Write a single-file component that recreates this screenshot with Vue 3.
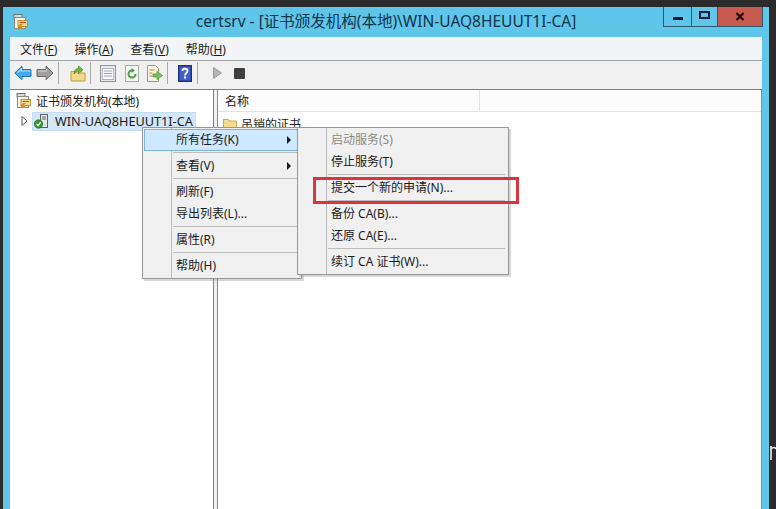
<template>
  <div class="page">
    <div class="window">
      <header class="titlebar">
        <div class="title-left">
          <svg width="16" height="16" viewBox="0 0 16 16">
            <rect x="1" y="0.5" width="8" height="3.500" fill="#d8dce0" stroke="#6f7378"/>
            <rect x="1.500" y="3.500" width="11" height="11" fill="#f6f3ea" stroke="#8a8a80"/>
            <rect x="5" y="6.500" width="9.500" height="6" fill="#f5dd92" stroke="#c98e2c"/>
            <path d="M6.500 8.500h6.500" stroke="#d0452a"/>
            <path d="M6.500 10.500h3" stroke="#c98e2c"/>
            <circle cx="7" cy="13" r="2.200" fill="#d9902c"/>
            <circle cx="6" cy="14" r="1" fill="#5aa23a"/>
          </svg>
        </div>
        <div class="title">certsrv - [证书颁发机构(本地)\WIN-UAQ8HEUUT1I-CA]</div>
        <div class="caption">
          <div class="cap cap-min"><span class="glyph-min"></span></div>
          <div class="cap cap-max"><span class="glyph-max"></span></div>
          <div class="cap cap-close">
            <svg width="10" height="9" viewBox="0 0 10 9"><path d="M1.500 1l7 7M8.500 1l-7 7" stroke="#200a0a" stroke-width="2.200"/></svg>
          </div>
        </div>
      </header>

      <div class="client">
        <nav class="menubar">
          <span v-for="m in menus" :key="m.name" class="menu">{{ m.name }}(<u>{{ m.key }}</u>)</span>
        </nav>

        <div class="toolbar">
          <svg class="tb tb-back" width="18" height="16" viewBox="0 0 18 16">
            <path d="M.8 8 8 1.200v3.300h9v7H8v3.300z" fill="#45a8ea" stroke="#1c78bd" stroke-linejoin="round"/>
            <path d="M3.500 7.500 7.500 4v2h9" fill="none" stroke="#aee0fa" stroke-width="1.200"/>
          </svg>
          <svg class="tb tb-fwd" width="18" height="16" viewBox="0 0 18 16">
            <path d="M17 8 10 1.200v3.300H1v7h9v3.300z" fill="#a0a0a0" stroke="#6a6a6a" stroke-linejoin="round"/>
            <path d="M2 6h8.500V4" fill="none" stroke="#d2d2d2"/>
          </svg>
          <i class="sep s1"></i>
          <svg class="tb tb-up" width="16" height="17" viewBox="0 0 16 17">
            <path d="M1 6.500h4l1.500 1.500H15v8H1z" fill="#f4d98a" stroke="#c49a3e"/>
            <path d="M4 9C4 5 6.500 3.500 8.500 3.500V1L13 4.800 8.500 8.500V6C7 6 5.500 7 4 9z" fill="#76b83f" stroke="#467f22" stroke-width=".7"/>
          </svg>
          <i class="sep s2"></i>
          <svg class="tb tb-doc" width="16" height="17" viewBox="0 0 16 17">
            <rect x=".5" y=".5" width="15" height="16" fill="#e6e8eb" stroke="#8f9399"/>
            <rect x="2.500" y="3.500" width="11" height="11" fill="#f8f8f8" stroke="#b0b4ba"/>
            <path d="M4 6h8M4 8.500h8M4 11h8" stroke="#97a6bc"/>
          </svg>
          <svg class="tb tb-refresh" width="14" height="17" viewBox="0 0 14 17">
            <rect x=".5" y=".5" width="13" height="16" fill="#f3f4f1" stroke="#a5aca6"/>
            <path d="M10.500 9A3.500 3.500 0 1 1 7 5.500" fill="none" stroke="#4a9c48" stroke-width="2"/>
            <path d="M6.500 3 10 5.500 6.500 8z" fill="#4a9c48"/>
          </svg>
          <svg class="tb tb-export" width="17" height="17" viewBox="0 0 17 17">
            <path d="M1.500.5h8l3 3v13h-11z" fill="#f7f3e2" stroke="#a39873"/>
            <path d="M3.500 5h5M3.500 8h3M3.500 11h3" stroke="#b9802f"/>
            <path d="M7 9h4V6.500L16.500 10.500 11 14.500V12H7z" fill="#76c456" stroke="#4b9434" stroke-width=".7"/>
          </svg>
          <i class="sep s3"></i>
          <svg class="tb tb-help" width="14" height="17" viewBox="0 0 14 17">
            <rect x=".5" y=".5" width="13" height="16" fill="#2f49ad" stroke="#1c2e80"/>
            <rect x="2" y="2" width="10" height="13" fill="#4060c8"/>
            <path d="M4.500 6C4.500 3 9.500 3 9.500 6c0 2-2.500 2-2.500 4.500" fill="none" stroke="#fff" stroke-width="1.800"/>
            <rect x="6" y="11.500" width="2" height="2" fill="#fff"/>
          </svg>
          <i class="sep s4"></i>
          <svg class="tb tb-play" width="9" height="12" viewBox="0 0 9 12">
            <path d="M.5.5 8.500 6 .5 11.500z" fill="#b4b4b4" stroke="#9a9a9a"/>
          </svg>
          <span class="stop"></span>
        </div>

        <main class="panes">
          <section class="tree">
            <div class="tree-row root">
              <svg width="16" height="16" viewBox="0 0 16 16">
                <rect x="1" y="0.500" width="8" height="3.500" fill="#d8dce0" stroke="#6f7378"/>
                <rect x="1.500" y="3.500" width="11" height="11" fill="#f6f3ea" stroke="#8a8a80"/>
                <rect x="5" y="6.500" width="9.500" height="6" fill="#f5dd92" stroke="#c98e2c"/>
                <path d="M6.500 8.500h6.500" stroke="#d0452a"/>
                <path d="M6.500 10.500h3" stroke="#c98e2c"/>
                <circle cx="7" cy="13" r="2.200" fill="#d9902c"/>
              </svg>
              <span>证书颁发机构(本地)</span>
            </div>
            <div class="tree-row child">
              <svg class="twist" width="7" height="10" viewBox="0 0 7 10"><path d="M1 .5 6 5 1 9.500z" fill="#fff" stroke="#5a5a5a"/></svg>
              <div class="selected">
                <svg width="15" height="16" viewBox="0 0 15 16">
                  <rect x="6.500" y="1.500" width="7" height="13" fill="#e4e7ea" stroke="#5f6368"/>
                  <path d="M8 4h4M8 6h4" stroke="#5f6368"/>
                  <circle cx="4.500" cy="11" r="4.200" fill="#2f9a2f" stroke="#1a6a1a" stroke-width=".7"/>
                  <path d="M2.500 11l1.500 1.500L6.800 9.300" fill="none" stroke="#fff" stroke-width="1.300"/>
                </svg>
                <span class="node-label">WIN-UAQ8HEUUT1I-CA</span>
              </div>
            </div>
          </section>
          <div class="splitter"></div>
          <section class="list">
            <div class="list-head">
              <div class="col">名称</div>
            </div>
            <div class="list-row">
              <svg width="14" height="12" viewBox="0 0 14 12">
                <path d="M.5 1.500h5l1 1.500h7v8.500H.5z" fill="#f6dc8c" stroke="#cba850"/>
              </svg>
              <span>吊销的证书</span>
            </div>
          </section>
        </main>

        <div class="ctx ctx-main">
          <template v-for="(it, i) in mainMenu" :key="i">
            <div v-if="it.sep" class="ctx-sep"></div>
            <div v-else class="ctx-item" :class="{ hot: it.hot }">
              <span>{{ it.label }}</span><i v-if="it.arrow" class="arrow"></i>
            </div>
          </template>
        </div>

        <div class="ctx ctx-sub">
          <template v-for="(it, i) in subMenu" :key="i">
            <div v-if="it.sep" class="ctx-sep"></div>
            <div v-else class="ctx-item" :class="{ off: it.off }"><span>{{ it.label }}</span></div>
          </template>
        </div>

        <div class="callout"></div>
      </div>
    </div>
    <svg class="stray" width="6" height="16" viewBox="0 0 6 16"><path d="M1 1v14M1 4c2-2 4-2 5 0" fill="none" stroke="#f2f2f2" stroke-width="1.600"/></svg>
  </div>
</template>

<script setup>
const menus = [
  { name: '文件', key: 'F' },
  { name: '操作', key: 'A' },
  { name: '查看', key: 'V' },
  { name: '帮助', key: 'H' }
]
const mainMenu = [
  { label: '所有任务(K)', arrow: true, hot: true },
  { sep: true },
  { label: '查看(V)', arrow: true },
  { sep: true },
  { label: '刷新(F)' },
  { label: '导出列表(L)...' },
  { sep: true },
  { label: '属性(R)' },
  { sep: true },
  { label: '帮助(H)' }
]
const subMenu = [
  { label: '启动服务(S)', off: true },
  { label: '停止服务(T)' },
  { sep: true },
  { label: '提交一个新的申请(N)...' },
  { sep: true },
  { label: '备份 CA(B)...' },
  { label: '还原 CA(E)...' },
  { sep: true },
  { label: '续订 CA 证书(W)...' }
]
</script>

<style>
html, body { margin: 0; background: #2b2b2b; }
</style>

<style scoped>
.page {
  position: relative;
  width: 776px;
  height: 509px;
  box-sizing: border-box;
  padding: 7px 7px 0 3px;
  background: #2b2b2b;
  overflow: hidden;
  font-family: "Noto Sans", "Noto Sans CJK SC", sans-serif;
  font-size: 12px;
  color: #1a1a1a;
}
.window {
  height: 502px;
  display: flex;
  flex-direction: column;
  background: #5fc6ea;
}
.titlebar {
  height: 30px;
  flex: none;
  display: grid;
  grid-template-columns: 1fr auto 1fr;
}
.title-left { padding: 7px 0 0 10px; }
.title {
  font-size: 15.5px;
  line-height: 28px;
  color: #12334a;
  white-space: nowrap;
}
.caption {
  display: flex;
  justify-content: flex-end;
  padding-right: 6px;
  height: 20px;
}
.cap {
  height: 20px;
  box-sizing: border-box;
  display: flex;
  justify-content: center;
  align-items: center;
  border-bottom: 1px solid #2a5a70;
  border-left: 1px solid #2a5a70;
}
.cap-min { width: 28px; }
.cap-max { width: 26px; }
.cap-close {
  width: 46px;
  background: #c75b50;
  border-right: 1px solid #2a5a70;
}
.glyph-min { width: 10px; height: 3px; margin-top: 3px; background: #0c1a40; }
.glyph-max {
  width: 11px;
  height: 8px;
  box-sizing: border-box;
  margin-top: -3px;
  border: 2px solid #0c1a40;
}
.client {
  position: relative;
  flex: 1;
  min-height: 0;
  margin: 0 7px;
  display: flex;
  flex-direction: column;
  background: #f0f0f0;
  border-radius: 2px 2px 0 0;
}
.menubar {
  height: 23px;
  flex: none;
  display: flex;
  align-items: center;
  padding-left: 10px;
  gap: 17px;
  background: #f3f4f6;
  border-bottom: 1px solid #a4a4a4;
}
.menu { white-space: nowrap; }
.toolbar {
  height: 29px;
  flex: none;
  box-sizing: border-box;
  display: flex;
  align-items: center;
  padding: 0 0 4px 4px;
  background: #f0f0f0;
  border-bottom: 1px solid #7f7f7f;
}
.tb { flex: none; display: block; }
.tb-fwd { margin-left: 4px; }
.sep { flex: none; width: 1px; height: 22px; background: #a8a8a8; }
.s1 { margin-left: 4px; }
.tb-up { margin-left: 11px; }
.s2 { margin-left: 4px; }
.tb-doc { margin-left: 9px; }
.tb-refresh { margin-left: 9px; }
.tb-export { margin-left: 7px; }
.s3 { margin-left: 4px; }
.tb-help { margin-left: 10px; }
.s4 { margin-left: 5px; }
.tb-play { margin-left: 15px; }
.stop {
  flex: none;
  width: 11px;
  height: 11px;
  margin-left: 12px;
  background: #3f3f3f;
  border-radius: 1px;
}
.panes {
  flex: 1;
  min-height: 0;
  display: flex;
}
.tree {
  width: 203px;
  flex: none;
  padding-top: 1px;
  box-sizing: content-box;
  background: #fff;
  border-right: 1px solid #7f7f7f;
}
.tree-row {
  display: flex;
  align-items: center;
}
.root {
  height: 20px;
  padding-left: 6px;
  gap: 4px;
  white-space: nowrap;
}
.child {
  height: 20px;
  padding-left: 11px;
  gap: 4px;
}
.twist { flex: none; }
.selected {
  width: 164px;
  height: 19px;
  flex: none;
  box-sizing: border-box;
  display: flex;
  align-items: center;
  padding-left: 1px;
  gap: 6px;
  background: #d3e7f8;
  border: 1px solid #c2dcf2;
  white-space: nowrap;
}
.node-label { font-size: 12.7px; }
.splitter { width: 3px; flex: none; background: #f0f0f0; }
.list {
  flex: 1;
  background: #fff;
  border-left: 1px solid #8a8a8a;
  border-right: 1px solid #8a8a8a;
}
.list-head {
  height: 21px;
  border-bottom: 1px solid #e2e2e2;
  background: #fcfcfc;
}
.col {
  width: 262px;
  height: 21px;
  box-sizing: border-box;
  line-height: 24px;
  padding-left: 7px;
  border-right: 1px solid #e2e2e2;
}
.list-row {
  height: 18px;
  display: flex;
  align-items: center;
  gap: 4px;
  padding: 3px 0 0 5px;
  white-space: nowrap;
}
.ctx {
  position: absolute;
  box-sizing: border-box;
  padding: 1px;
  background: #f0f0f0;
  border: 1px solid #979797;
  box-shadow: 2px 2px 0 rgba(140, 140, 140, .35);
  background-image: linear-gradient(#bcbcbc, #bcbcbc);
  background-repeat: no-repeat;
  background-size: 1px 100%;
  background-position: 28px 0;
}
.ctx-main { left: 132px; top: 90px; width: 160px; height: 152px; }
.ctx-sub { left: 287px; top: 90px; width: 212px; height: 148px; }
.ctx-item {
  position: relative;
  height: 22px;
  box-sizing: border-box;
  line-height: 22px;
  padding-left: 32px;
  white-space: nowrap;
}
.hot {
  background: #cde8ff;
  box-shadow: inset 0 0 0 1px #7cb2e6;
}
.off { color: #8a8a8a; }
.arrow {
  position: absolute;
  right: 9px;
  top: 7px;
  border-left: 4px solid #1a1a1a;
  border-top: 4px solid transparent;
  border-bottom: 4px solid transparent;
}
.ctx-sep {
  height: 4px;
  box-sizing: border-box;
  margin-left: 29px;
  margin-right: 2px;
  border-top: 1px solid #bcbcbc;
  position: relative;
  top: 1px;
}
.callout {
  position: absolute;
  left: 303px;
  top: 140px;
  width: 206px;
  height: 27px;
  box-sizing: border-box;
  border: 3px solid #d9353f;
}
.stray { position: absolute; left: 770px; top: 445px; }
</style>
